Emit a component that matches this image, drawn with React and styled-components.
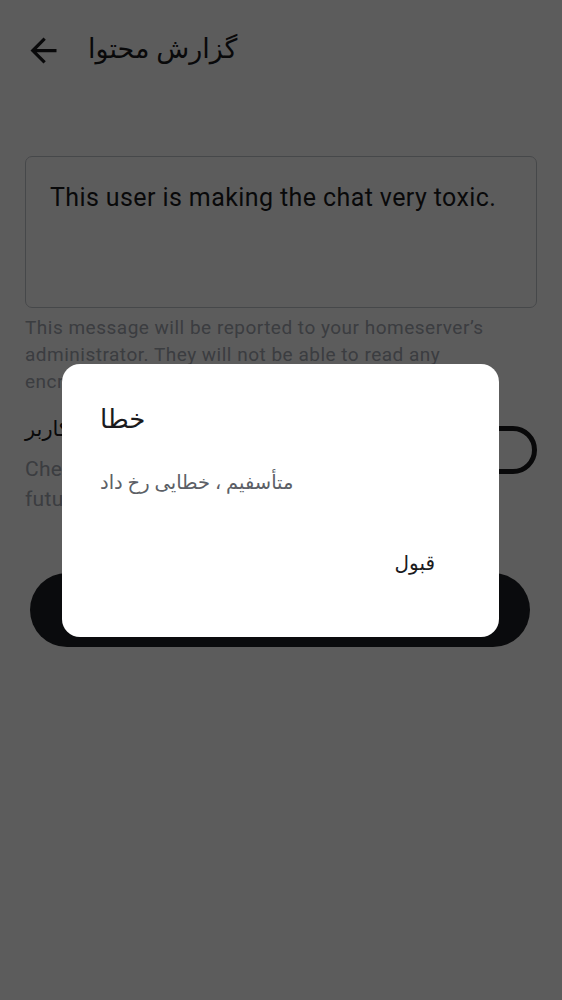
import React from 'react'
import styled, { createGlobalStyle } from 'styled-components'

const GlobalStyle = createGlobalStyle`
  html, body {
    margin: 0;
    padding: 0;
    background: #ffffff;
  }
  body {
    font-family: Roboto, "DejaVu Sans", sans-serif;
    color: #1b1b1d;
  }
`

const BackIcon = () => (
  <svg width="39" height="39" viewBox="0 0 24 24" fill="currentColor">
    <path d="M20 11H7.83l5.59-5.59L12 4l-8 8 8 8 1.41-1.41L7.83 13H20v-2z" />
  </svg>
)

const App = () => {
  return (
    <>
      <GlobalStyle />
      <Screen>
        <TopBar>
          <BackButton>
            <BackIcon />
          </BackButton>
          <TopTitle>گزارش محتوا</TopTitle>
        </TopBar>

        <Content>
          <ReasonField>This user is making the chat very toxic.</ReasonField>
          <Helper>
            This message will be reported to your homeserver’s administrator.
            They will not be able to read any encrypted content of this message.
          </Helper>

          <SwitchRow>
            <SwitchText>
              <SwitchTitle>مسدود کردن کاربر</SwitchTitle>
              <SwitchDesc>
                Check if you want to hide all current and future messages from this user
              </SwitchDesc>
            </SwitchText>
            <Track>
              <Thumb />
            </Track>
          </SwitchRow>

          <SendButton>ارسال گزارش</SendButton>
        </Content>
      </Screen>

      <Overlay>
        <Dialog>
          <DialogTitle>خطا</DialogTitle>
          <DialogBody>متأسفیم ، خطایی رخ داد</DialogBody>
          <DialogActions>
            <TextButton>قبول</TextButton>
          </DialogActions>
        </Dialog>
      </Overlay>
    </>
  )
}

export default App

const Screen = styled.div`
min-height: 1000px;
background: #ffffff;
`
const TopBar = styled.div`
display: flex;
align-items: center;
height: 98px;
padding-left: 24px;
gap: 25px;
`
const BackButton = styled.div`
display: flex;
width: 39px;
height: 39px;
margin-top: 2px;
color: #1b1b1d;
`
const TopTitle = styled.div`
font-size: 27px;
line-height: 34px;
color: #1b1b1d;
`
const Content = styled.div`
padding: 58px 25px 0;
`
const ReasonField = styled.div`
box-sizing: border-box;
height: 152px;
border: 1.5px solid #c3c7cd;
border-radius: 7px;
padding: 25px 24px;
font-size: 25px;
line-height: 32px;
letter-spacing: 0.4px;
color: #1b1b1d;
`
const Helper = styled.div`
margin-top: 6px;
padding-right: 36px;
font-size: 19px;
line-height: 27px;
letter-spacing: 0.5px;
color: #a3a8b2;
`
const SwitchRow = styled.div`
display: flex;
justify-content: space-between;
align-items: flex-start;
margin-top: 19px;
`
const SwitchText = styled.div`
flex: 1;
`
const SwitchTitle = styled.div`
font-size: 21px;
line-height: 30px;
color: #1b1b1d;
`
const SwitchDesc = styled.div`
margin-top: 10px;
padding-right: 40px;
font-size: 21px;
line-height: 30px;
letter-spacing: 0.3px;
color: #a3a8b2;
`
const Track = styled.div`
box-sizing: border-box;
flex-shrink: 0;
width: 80px;
height: 48px;
margin-top: 12px;
border: 5px solid #1b1b1d;
border-radius: 24px;
display: flex;
align-items: center;
padding-left: 8px;
`
const Thumb = styled.div`
width: 22px;
height: 22px;
border-radius: 50%;
background: #1b1b1d;
`
const SendButton = styled.div`
display: flex;
align-items: center;
justify-content: center;
height: 74px;
margin: 59px 7px 0 5px;
border-radius: 37px;
background: #1e2024;
color: #ffffff;
font-size: 21px;
`
const Overlay = styled.div`
position: fixed;
inset: 0;
background: rgba(0, 0, 0, 0.64);
display: flex;
align-items: center;
justify-content: center;
`
const Dialog = styled.div`
box-sizing: border-box;
width: 437px;
padding: 38px 38px 46px;
background: #ffffff;
border-radius: 18px;
margin-left: -1px;
`
const DialogTitle = styled.div`
font-size: 26px;
line-height: 34px;
color: #1b1b1d;
`
const DialogBody = styled.div`
margin-top: 33px;
font-size: 19.5px;
line-height: 28px;
color: #5c5f66;
`
const DialogActions = styled.div`
display: flex;
justify-content: flex-end;
margin-top: 38px;
`
const TextButton = styled.div`
display: flex;
align-items: center;
height: 56px;
padding: 0 26px;
font-size: 20px;
color: #1b1b1d;
`
